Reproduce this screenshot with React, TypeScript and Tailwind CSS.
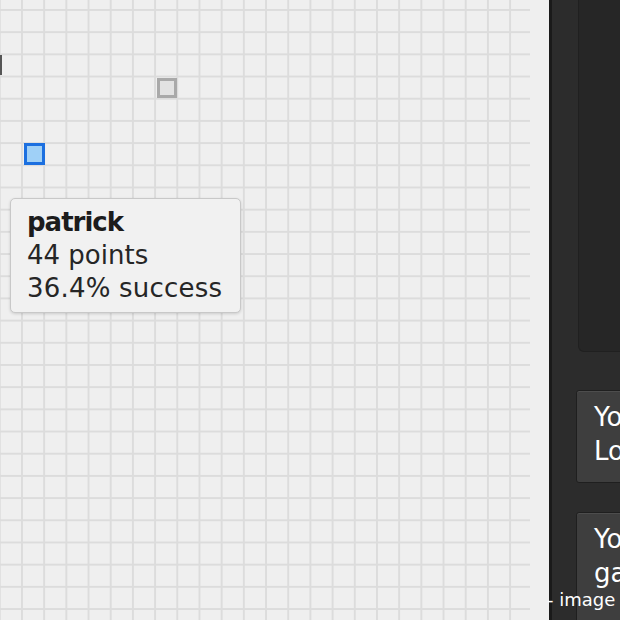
// App.tsx
import React from 'react'

interface Player {
  name: string
  points: number
  success: string
}

const hovered: Player = { name: 'patrick', points: 44, success: '36.4%' }

const Canvas: React.FC = () => {
  return (
    <div className="relative h-full w-[549px] shrink-0 bg-[#efefef]">
      {/* grid paper */}
      <div className="h-full w-[530px] bg-[linear-gradient(to_right,#dcdcdc_2px,transparent_2px),linear-gradient(to_bottom,#dcdcdc_2px,transparent_2px)] bg-size-[22.2px_22.2px] bg-position-[21px_9px]" />

      {/* cut-off marker on the left edge */}
      <div className="absolute left-0 top-[55px] h-[20px] w-[2px] bg-[#555]" />

      {/* other player */}
      <div className="absolute left-[157px] top-[78px] h-[20px] w-[20px] border-[3px] border-[#a9a9a9] bg-[#e2e2e2]" />

      {/* selected player */}
      <div className="absolute left-[24px] top-[143px] h-[22px] w-[21px] border-[3px] border-[#1b6fe0] bg-[#9fd0f7]" />

      {/* tooltip */}
      <div
        className="absolute left-[10px] top-[198px] w-[231px] rounded-[5px] border border-[#c8c8c8] bg-[#f1f1f1] pl-[16px] pt-[7px] pb-[7px] text-[26px] leading-[33px] text-[#262626] shadow-[0_1px_3px_rgba(0,0,0,0.15)]"
        style={{ fontFamily: '"DejaVu Sans", sans-serif' }}
      >
        <div className="font-bold tracking-[-1px] text-[#1c1c1c]">{hovered.name}</div>
        <div>{hovered.points} points</div>
        <div className="whitespace-nowrap tracking-[0.2px]">{hovered.success} success</div>
      </div>
    </div>
  )
}

const SideCard: React.FC<{ lines: string[]; className?: string }> = ({ lines, className }) => (
  <div
    className={`ml-[24px] w-[120px] shrink-0 rounded-[3px] border border-[#1f1f1f] bg-[#3e3e3e] pl-[17px] pt-[9px] text-[26px] leading-[34px] whitespace-nowrap text-white shadow-[inset_0_1px_0_rgba(255,255,255,0.08)] ${className ?? ''}`}
    style={{ fontFamily: '"DejaVu Sans", sans-serif' }}
  >
    {lines.map((l) => (
      <div key={l}>{l}</div>
    ))}
  </div>
)

export default function App() {
  return (
    <div className="relative flex h-[620px] w-[620px] overflow-hidden bg-[#2b2b2b]">
      <Canvas />
      <div className="w-[3px] shrink-0 bg-[#1a1a1a]" />

      {/* side panel */}
      <div className="flex flex-1 flex-col overflow-hidden bg-[#2c2c2c]">
        <div className="ml-[26px] h-[352px] w-[80px] shrink-0 rounded-bl-[6px] border-b border-l border-[#202020] bg-[#262626]" />
        <SideCard lines={['Your rank', 'Loading']} className="mt-[38px] h-[93px]" />
        <SideCard lines={['Your last', 'game']} className="mt-[29px] h-[120px]" />
      </div>

      {/* caption */}
      <div
        className="absolute left-[547px] top-[588px] text-[18px] leading-[24px] text-white"
        style={{ fontFamily: '"DejaVu Sans", sans-serif' }}
      >
        - image
      </div>
    </div>
  )
}
